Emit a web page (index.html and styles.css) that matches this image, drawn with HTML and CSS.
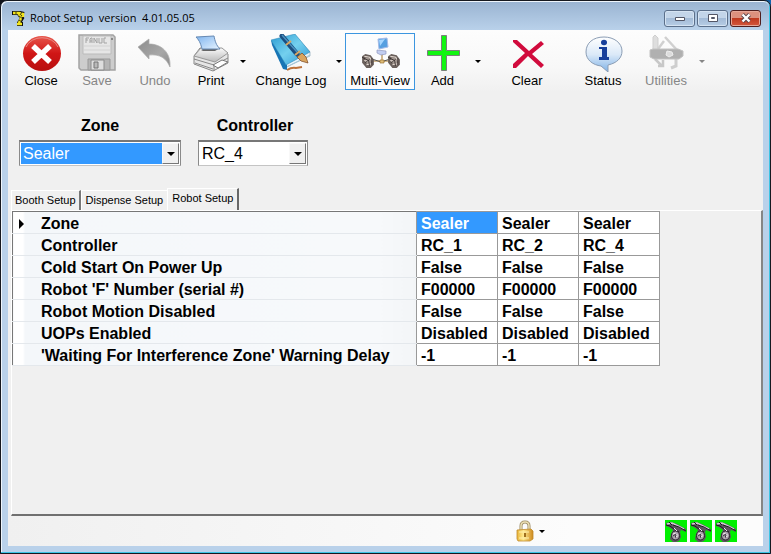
FILE: index.html
```html
<!DOCTYPE html>
<html lang="en">
<head>
<meta charset="utf-8">
<meta name="viewport" content="width=device-width, initial-scale=1">
<title>Robot Setup</title>
<link rel="stylesheet" href="styles.css">
</head>
<body>
<svg class="defs" aria-hidden="true">
  <defs>
    <linearGradient id="red" x1="0" y1="0" x2="0" y2="1"><stop offset="0" stop-color="#e8554a"/><stop offset=".5" stop-color="#d01616"/><stop offset="1" stop-color="#b81010"/></linearGradient>
    <linearGradient id="book" x1="0" y1="0" x2="1" y2="1"><stop offset="0" stop-color="#2b9bd2"/><stop offset=".5" stop-color="#74d0ee"/><stop offset="1" stop-color="#2b96d4"/></linearGradient>
    <linearGradient id="paper" x1="0" y1="0" x2="1" y2="1"><stop offset="0" stop-color="#7fb4ee"/><stop offset="1" stop-color="#e6f3ff"/></linearGradient>
    <linearGradient id="case" x1="0" y1="0" x2="0" y2="1"><stop offset="0" stop-color="#fafafa"/><stop offset="1" stop-color="#b9b9b9"/></linearGradient>
    <linearGradient id="bubble" x1="0" y1="0" x2="0" y2="1"><stop offset="0" stop-color="#ffffff"/><stop offset=".5" stop-color="#dbe9f8"/><stop offset="1" stop-color="#7fb2e6"/></linearGradient>
    <linearGradient id="gold" x1="0" y1="0" x2="1" y2="0"><stop offset="0" stop-color="#e9b63a"/><stop offset=".4" stop-color="#ffe98f"/><stop offset="1" stop-color="#cf8a1d"/></linearGradient>
    <linearGradient id="undo" x1="0" y1="0" x2="1" y2="1"><stop offset="0" stop-color="#8c8c8c"/><stop offset=".6" stop-color="#a8a8a8"/><stop offset="1" stop-color="#8b8b8b"/></linearGradient>
    <symbol id="robot" viewBox="0 0 22 22">
      <path fill="#00f000" d="M0 0h22v22H0z"/>
      <path fill="#5d545e" d="M1 3l5-1 6 2 9 5v3l-5-2-1 2 1 5-2 4-3 1H8l-3-3 1-5 2-4-4-3-3-1z"/>
      <path fill="none" stroke="#d2ccd4" stroke-width="1.500" d="M2 4l5-1 6 3 6 3"/>
      <path fill="none" stroke="#1c181e" stroke-width="1" d="M1 5l4 1 4 3M8 5l6 2 7 4M4 2l3 3M10 10l4 2"/>
      <ellipse cx="10.500" cy="15.500" rx="4" ry="4.500" fill="#a9a0aa" stroke="#2b242d"/>
      <path fill="none" stroke="#f1e6ee" d="M9 8l3 3M8 14l3-1M9 18l3-2M12 14v3"/>
      <path fill="none" stroke="#3d333f" d="M8 16l3-2M10 18l1-3"/>
    </symbol>
    <symbol id="wheel" viewBox="0 0 13 14">
      <path fill="#6a605c" d="M1 3l3-2 5 1 3 4v5l-3 3H5L1 9z"/>
      <path fill="#a29790" d="M4 4l4 1 2 3-1 4-3-1-2-3z"/>
      <path fill="none" stroke="#e2d8d0" d="M3 3l5 1 2 3M3 7l4 1M5 11l5-1"/>
      <path fill="none" stroke="#332b2b" stroke-width=".8" d="M1 4l6 3 1 5M4 9l4-3M10 5v6"/>
    </symbol>
  </defs>
</svg>
<div class="window">
  <header class="titlebar">
    <svg class="app-icon" viewBox="0 0 16 16" aria-hidden="true">
      <path fill="none" stroke="#111" stroke-width="4" d="M1 3h8l4 1M8 4l3 4-3 5M6 14h6"/>
      <path fill="none" stroke="#f3e51c" stroke-width="2.400" d="M2 3h6l4 1v3M8 4l2 4-2 5M6 14h5"/>
      <path fill="none" stroke="#111" stroke-width=".8" d="M5 2v2M8 6l4 3M8 10l3 2M11 2l-2 3"/>
    </svg>
    <h1>Robot Setup&nbsp; version&nbsp; 4.01.05.05</h1>
    <div class="caption">
      <button type="button" aria-label="Minimize"><svg viewBox="0 0 14 10"><path fill="#fff" stroke="#535666" d="M2.500 4.500h9v3h-9z"/></svg></button>
      <button type="button" aria-label="Maximize"><svg viewBox="0 0 14 10"><path fill="#fff" stroke="#535666" fill-rule="evenodd" d="M2.500 1.500h9v7h-9zM5.500 4.500v1h3v-1z"/></svg></button>
      <button type="button" class="quit" aria-label="Close window"><svg viewBox="0 0 14 10"><path fill="none" stroke="#54434a" stroke-width="4" d="M3.500 1.500l7 7M10.500 1.500l-7 7"/><path fill="none" stroke="#fff" stroke-width="2.400" d="M3.500 1.500l7 7M10.500 1.500l-7 7"/></svg></button>
    </div>
  </header>

  <main class="client">
    <nav class="toolbar" aria-label="Main">
      <button type="button" class="tool">
        <svg viewBox="0 0 40 38"><ellipse cx="21" cy="19.500" rx="19" ry="17.500" fill="url(#red)"/><path fill="none" stroke="#e88a84" stroke-width="1" d="M5 13a17 14 0 0 1 32 0"/><path fill="none" stroke="#fff" stroke-width="5.500" d="M12 12l17 16M29 12L12 28"/></svg>
        <span>Close</span>
      </button>
      <button type="button" class="tool" disabled>
        <svg viewBox="0 0 40 38"><path fill="#cdcdcd" stroke="#a3a3a3" stroke-width="1.500" d="M2 1h34l2 2v33H4l-2-2z"/><path fill="#e6e6e6" stroke="#bbb" d="M6 2h28v18H6z"/><path fill="none" stroke="#a3a3a3" stroke-width="1" d="M9 9V4h3M9 6h2M13 9V5l1-1h1v5M13 7h2M17 9V4l3 5V4M22 4v5h3V4M29 4h-2v5h3"/><path fill="none" stroke="#d2d2d2" d="M7 12h26M7 16h26"/><path fill="#b5b5b5" stroke="#999" d="M11 25h22v11H11z"/><path fill="#dedede" stroke="#8c8c8c" d="M14 26h13v10H14z"/><path fill="#b9b9b9" stroke="#777" d="M17 28h4v6h-4z"/><path fill="#888" d="M34 4h2v2h-2z"/></svg>
        <span>Save</span>
      </button>
      <button type="button" class="tool wide" disabled>
        <svg viewBox="0 0 40 38"><path fill="url(#undo)" stroke="#aaa" stroke-width=".7" d="M3 13L14 5v5c12 0 22 8 21 23-4-9-10-13-21-12v4z"/></svg>
        <span>Undo</span>
      </button>
      <button type="button" class="tool narrow">
        <svg viewBox="0 0 40 38"><path fill="#e6e6e6" stroke="#888" d="M9 14L3 22v8l19 7 15-8v-9l-7-5z"/><path fill="url(#case)" stroke="#999" d="M3 22l7-8h21l6 5-13 9z"/><path fill="#666" d="M10 16l4-2h15l-5 3H12z"/><path fill="url(#paper)" stroke="#6689b3" d="M5 3l18-1c1 5 2 9 6 13H11C10 11 9 7 5 3z"/><path fill="none" stroke="#888" d="M3 25l20 6 14-7M23 30v7M4 29l18 6"/><path fill="#fff" stroke="#777" d="M22 31l9-5 6 2-10 6z"/></svg>
        <span>Print</span>
      </button>
      <button type="button" class="drop" aria-label="Print options"></button>
      <button type="button" class="tool log">
        <svg viewBox="0 0 40 38"><path fill="#e6f3fa" stroke="#8aa7b7" stroke-width=".7" d="M1 7l12 27L39 22v-4L24 1z"/><path fill="#1875b5" d="M0 6l1 5 11 24 4 1V31z"/><path fill="url(#book)" stroke="#2983b4" stroke-width=".5" d="M0 6L24 0l15 18-24 13z"/><path fill="none" stroke="#a4c8da" stroke-width="1" d="M16 33l23-12"/><path fill="none" stroke="#1c4e80" stroke-width="5" stroke-linecap="round" d="M11 2l15 18"/><path fill="none" stroke="#4a92bf" stroke-width="1.500" d="M11 1l15 17"/><path fill="none" stroke="#d9a560" stroke-width="2" d="M15 11l5-4M24 21l5-4"/><path fill="#d9a560" stroke="#75431f" stroke-width=".7" d="M26 23l5-4 4 4 2 6-7-2z"/><path fill="none" stroke="#bc713a" stroke-width="2" d="M16 36q5-3 9-2l6-1"/></svg>
        <span>Change Log</span>
      </button>
      <button type="button" class="drop" aria-label="Change log options"></button>
      <button type="button" class="tool view selected" aria-pressed="true">
        <svg viewBox="0 0 40 38"><path fill="none" stroke="#c5a36d" stroke-width="1.500" d="M22 20v8M13 27h18"/><path fill="none" stroke="#555" d="M12 25l9 3 9-3"/><path fill="#dfbd78" stroke="#9c7338" stroke-width=".7" d="M20 26h4v3h-4z"/><path fill="#c1cdf0" stroke="#8f96bd" stroke-width=".7" d="M17 16l9 1v3l-5 1-4-2z"/><path fill="#559fe0" stroke="#a5bbe8" d="M18 5l9-1 1 9-9 2z"/><path fill="#a6d6ff" d="M19 6l6-1-5 7z"/><use href="#wheel" x="1" y="19" width="14" height="15"/><use href="#wheel" x="27" y="19" width="14" height="15"/></svg>
        <span>Multi-View</span>
      </button>
      <button type="button" class="tool add">
        <svg viewBox="0 0 40 38"><path fill="#11f511" stroke="#79817a" d="M18.500 1.500h5v15h13v5h-13v15h-5v-15h-14v-5h14z"/></svg>
        <span>Add</span>
      </button>
      <button type="button" class="drop add-drop" aria-label="Add options"></button>
      <button type="button" class="tool clear">
        <svg viewBox="0 0 40 38"><path fill="#d10b3d" d="M6 6h4l12 11L34 7l3 3-12 10 12 11-3 3-13-12L9 34H6v-4l12-11L6 8z"/></svg>
        <span>Clear</span>
      </button>
      <button type="button" class="tool status">
        <svg viewBox="0 0 40 38"><path fill="url(#bubble)" stroke="#8b9db4" d="M21 3C10 3 3 9 3 18c0 8 7 13 15 14l7 6v-7c9-2 14-7 14-14C39 9 31 3 21 3z"/><ellipse cx="21" cy="8.500" rx="3" ry="2.800" fill="#173f9b"/><path fill="#173f9b" d="M16 13h8v10h2v3H16v-3h3v-8h-3z"/></svg>
        <span>Status</span>
      </button>
      <button type="button" class="tool utilities" disabled>
        <svg viewBox="0 0 40 38"><path fill="#dedede" stroke="#cfcfcf" d="M7 16V3l2-2 3 3v12z"/><path fill="none" stroke="#d0d0d0" stroke-width="2.500" d="M19 3l12 13M18 7l-6 8"/><path fill="none" stroke="#c8c8c8" stroke-width="2.500" d="M9 25l7 7M17 26v6h-5"/><path fill="none" stroke="#cecece" stroke-width="3" d="M30 24v8l-5 2"/><path fill="#b0b0b0" stroke="#c2c2c2" d="M4 16l3-1h25l5 2v5l-4 3H8l-4-2z"/><path fill="#dcdcdc" stroke="#eee" d="M21 17l5 1 1 3-4 2-3-2z"/></svg>
        <span>Utilities</span>
      </button>
      <button type="button" class="drop" aria-label="Utilities options" disabled></button>
    </nav>

    <form class="filters">
      <div class="field zone">
        <label for="zone">Zone</label>
        <div class="combo active"><select id="zone"><option>Sealer</option></select><span class="combo-arrow"></span></div>
      </div>
      <div class="field controller">
        <label for="controller">Controller</label>
        <div class="combo"><select id="controller"><option>RC_4</option><option>RC_1</option><option>RC_2</option></select><span class="combo-arrow"></span></div>
      </div>
    </form>

    <div class="tabs" role="tablist">
      <button type="button" role="tab" aria-selected="false">Booth Setup</button>
      <button type="button" role="tab" aria-selected="false">Dispense Setup</button>
      <button type="button" role="tab" aria-selected="true">Robot Setup</button>
    </div>
    <section class="panel" role="tabpanel" aria-label="Robot Setup">
      <table>
        <colgroup><col class="names"><col class="value"><col class="value"><col class="value"></colgroup>
        <tbody>
          <tr class="current"><th scope="row">Zone</th><td class="picked">Sealer</td><td>Sealer</td><td>Sealer</td></tr>
          <tr><th scope="row">Controller</th><td>RC_1</td><td>RC_2</td><td>RC_4</td></tr>
          <tr><th scope="row">Cold Start On Power Up</th><td>False</td><td>False</td><td>False</td></tr>
          <tr><th scope="row">Robot 'F' Number (serial #)</th><td>F00000</td><td>F00000</td><td>F00000</td></tr>
          <tr><th scope="row">Robot Motion Disabled</th><td>False</td><td>False</td><td>False</td></tr>
          <tr><th scope="row">UOPs Enabled</th><td>Disabled</td><td>Disabled</td><td>Disabled</td></tr>
          <tr><th scope="row">'Waiting For Interference Zone' Warning Delay</th><td>-1</td><td>-1</td><td>-1</td></tr>
        </tbody>
      </table>
    </section>

    <footer class="statusbar">
      <button type="button" class="lock" aria-label="Lock">
        <svg viewBox="0 0 18 22"><path fill="none" stroke="#9a8a62" stroke-width="3" d="M5 11V6q0-4 4-4t4 4v4"/><path fill="none" stroke="#ecdfb4" stroke-width="1.500" d="M5 11V6q0-4 4-4t4 4v4"/><path fill="url(#gold)" stroke="#c08a2b" stroke-width=".8" d="M1 10l14-1 2 2v8l-3 2H2l-1-2z"/><path fill="none" stroke="#fff0ab" d="M3 12h10M3 18h10"/><path fill="#a0701f" d="M8 13h2v4H8z"/></svg>
        <span class="arrow"></span>
      </button>
      <div class="robots">
        <svg role="img" aria-label="Robot 1"><use href="#robot"/></svg>
        <svg role="img" aria-label="Robot 2"><use href="#robot"/></svg>
        <svg role="img" aria-label="Robot 3"><use href="#robot"/></svg>
      </div>
    </footer>
  </main>
</div>
</body>
</html>
```
FILE: styles.css
```css
* { box-sizing: border-box; }

body {
  margin: 0;
  background: linear-gradient(90deg, #10131a 0 98%, #1268b4);
  font-family: "Liberation Sans", Arial, sans-serif;
  color: #000;
}

button, select { font: inherit; color: inherit; }
button { border: 0; padding: 0; background: none; }

.defs { position: absolute; width: 0; height: 0; }

.window {
  display: flex;
  flex-direction: column;
  height: 100vh;
  border: 1px solid #15181f;
  border-radius: 7px 7px 0 0;
  background: #b9d1ea;
  box-shadow: inset -1px -1px #3cc4e4, inset 1px 1px #eef5fc;
  padding: 1px 7px 7px;
}

.titlebar {
  display: flex;
  align-items: center;
  flex: 0 0 28px;
  margin: 0 -6px;
  padding: 4px 8px 0 9px;
  border-radius: 6px 6px 0 0;
  background: linear-gradient(#9ab4d2, #b9d1ea);
}

.app-icon { width: 16px; height: 16px; margin-right: 3px; }

h1 {
  flex: 1;
  margin: 0;
  font: 11px/16px "Open Sans", "Noto Sans", sans-serif;
}

.caption { display: flex; gap: 2px; }

.caption button {
  display: grid;
  place-items: center;
  width: 31px;
  height: 17px;
  border: 1px solid #5b6f8a;
  border-radius: 3px;
  box-shadow: inset 0 0 0 1px #d5e3f2;
  background: linear-gradient(#c3d5e9 50%, #a3bbd7 50%, #b7cde5);
}

.caption .quit {
  border-color: #501e1e;
  box-shadow: inset 0 0 0 1px #e5a798;
  background: linear-gradient(#dc917f 50%, #bf3a20 50%, #d4573c);
}

.caption svg { width: 14px; height: 10px; }

.client {
  display: flex;
  flex-direction: column;
  flex: 1;
  min-height: 0;
  background: #f0f0f0;
}

.toolbar {
  display: flex;
  align-items: center;
  flex: 0 0 62px;
  padding-left: 5px;
  background: linear-gradient(#fdfdfd, #f8f8f8 60%, #f0f0f0);
}

.tool {
  display: flex;
  flex-direction: column;
  align-items: center;
  width: 56px;
  height: 57px;
  border: 1px solid transparent;
  font-size: 13px;
  line-height: 17px;
  white-space: nowrap;
}

.tool svg { width: 40px; height: 38px; flex: none; }
.tool:disabled { color: #868686; }
.tool.wide { width: 60px; }
.tool.narrow { width: 52px; }
.tool.log { width: 84px; }
.tool.view { width: 70px; }
.tool.selected { border-color: #3c96e0; background: #fbfcfd; }
.tool.add { width: 55px; }
.tool.clear { margin-left: 13px; }
.tool.status { margin-left: 20px; }
.tool.utilities { width: 62px; margin-left: 4px; }

.drop {
  display: grid;
  place-items: center;
  width: 12px;
  height: 56px;
}

.add-drop { width: 16px; }
.utilities + .drop { width: 10px; }

.drop::before, .arrow {
  content: "";
  border: 3px solid transparent;
  border-top-color: #000;
  border-bottom: 0;
}

.drop:disabled::before { border-top-color: #868686; }

.filters {
  display: flex;
  gap: 17px;
  padding: 24px 11px 22px;
  font-size: 16px;
}

.field { display: flex; flex-direction: column; gap: 5px; }
.zone { width: 162px; }
.controller { width: 110px; }

.field label { font-weight: bold; line-height: 19px; text-align: center; }
.controller label { padding-left: 4px; }

.combo {
  display: flex;
  height: 26px;
  border: 1px solid #8a8a8a;
  border-top: 2px solid #777;
  border-bottom-color: #c4c4c4;
  background: #fff;
  padding: 1px;
}

.combo select {
  appearance: none;
  flex: 1;
  min-width: 0;
  border: 0;
  padding: 0 2px;
  background: #fff;
  outline: 0;
}

.active select { background: #3399ff; color: #fff; }

.combo-arrow {
  display: grid;
  place-items: center;
  width: 17px;
  border: 1px solid #777;
  border-top-color: #f8f8f8;
  border-left-color: #f8f8f8;
  background: #f0f0f0;
}

.combo-arrow::before {
  content: "";
  border: 4px solid transparent;
  border-top-color: #000;
  border-bottom: 0;
}

.tabs {
  display: flex;
  align-items: flex-end;
  flex: none;
  padding-left: 3px;
  font-size: 11px;
}

.tabs button {
  height: 20px;
  padding: 0 3px 2px;
  border: 1px solid #fff;
  border-right: 2px solid #777;
  border-bottom: 0;
}

.tabs button:nth-child(2) { padding: 0 4px 2px; border-right: 0; }

.tabs [aria-selected="true"] {
  height: 22px;
  padding: 0 4px 3px;
  border-right: 2px solid #686868;
}

.panel {
  flex: 1;
  margin-left: 3px;
  border: 1px solid #fff;
  border-right: 2px solid #858585;
  border-bottom: 2px solid #707070;
}

table {
  width: 648px;
  max-width: 100%;
  table-layout: fixed;
  border-collapse: collapse;
  border-left: 1px solid #777;
  border-top: 1px solid #777;
  font-size: 16px;
  font-weight: bold;
  line-height: 18px;
}

.value { width: 81px; }

tr { height: 22px; }

th {
  padding: 3px 0 0 28px;
  border-bottom: 1px solid #e4e8ec;
  background: linear-gradient(90deg, #fff 0 10px, #f4f7fa 11px, #f7f9fb 90%, #f3f5f7);
  text-align: left;
  white-space: nowrap;
}

.current th::before {
  content: "";
  float: left;
  margin: 4px 0 0 -22px;
  border: 5px solid transparent;
  border-left-color: #000;
  border-right: 0;
}

td {
  padding: 2px 0 0 4px;
  border: 1px solid #999;
  background: #fff;
}

.picked { background: #3399ff; color: #fff; }

.statusbar {
  display: grid;
  grid-template-columns: 2fr 1fr;
  align-items: center;
  flex: 0 0 30px;
  padding-right: 26px;
  background: linear-gradient(90deg, #f0f0f0, #fcfcfc 75%);
}

.lock {
  display: flex;
  align-items: center;
  justify-self: end;
  width: 30px;
  margin-right: -52px;
  gap: 5px;
}

.lock svg { width: 18px; height: 22px; }

.robots { display: flex; justify-content: flex-end; gap: 3px; }
.robots svg { width: 22px; height: 22px; }
```
